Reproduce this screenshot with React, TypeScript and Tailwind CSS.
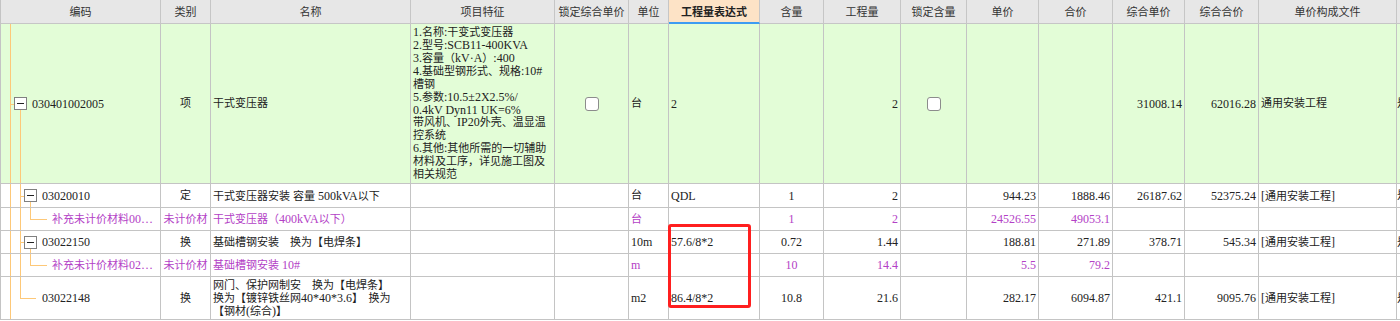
import React from 'react';

// latin runs get a size up so digits keep the half-width look of the original grid font
const LATIN = /([\u0020-\u007e±·…]+)/;
const mix = (s: string) => (
  <span>
    {s.split(LATIN).map((part, i) =>
      i % 2 ? (
        <span key={i} className="text-[12px]">
          {part}
        </span>
      ) : (
        <React.Fragment key={i}>{part}</React.Fragment>
      )
    )}
  </span>
);

const heads = [
  '编码',
  '类别',
  '名称',
  '项目特征',
  '锁定综合单价',
  '单位',
  '工程量表达式',
  '含量',
  '工程量',
  '锁定含量',
  '单价',
  '合价',
  '综合单价',
  '综合合价',
  '单价构成文件',
  '',
];

const align = [
  'justify-start',
  'justify-center',
  'justify-start',
  'justify-start',
  'justify-center',
  'justify-start',
  'justify-start',
  'justify-center',
  'justify-end',
  'justify-center',
  'justify-end',
  'justify-end',
  'justify-end',
  'justify-end',
  'justify-start',
  'justify-start',
];

const features = [
  '1.名称:干变式变压器',
  '2.型号:SCB11-400KVA',
  '3.容量（kV·A）:400',
  '4.基础型钢形式、规格:10#',
  '槽钢',
  '5.参数:10.5±2X2.5%/',
  '0.4kV Dyn11 UK=6%',
  '带风机、IP20外壳、温显温',
  '控系统',
  '6.其他:其他所需的一切辅助',
  '材料及工序，详见施工图及',
  '相关规范',
];

const Check = () => <span className="h-[14px] w-[14px] rounded-[3px] border border-[#8c8c8c] bg-white" />;

const Toggle = () => (
  <span className="relative z-10 flex h-[13px] w-[13px] shrink-0 items-center justify-center border border-[#808080] bg-white">
    <span className="h-px w-[7px] bg-[#222]" />
  </span>
);

const V = ({ x, part }: { x: string; part: 'full' | 'top' | 'bottom' }) => {
  const span = part === 'full' ? 'top-0 bottom-0' : part === 'top' ? 'top-0 h-1/2' : 'top-1/2 bottom-0';
  return <span className={`absolute w-px bg-[#fdc878] ${x} ${span}`} />;
};

const H = ({ x, w }: { x: string; w: string }) => (
  <span className={`absolute top-1/2 h-px bg-[#fdc878] ${x} ${w}`} />
);

type Row = {
  bg: string;
  color: string;
  tree: React.ReactNode;
  cells: React.ReactNode[];
};

const rows: Row[] = [
  {
    bg: 'bg-[#e3fdd7]',
    color: 'text-[#222]',
    tree: (
      <>
        <V x="left-[9px]" part="full" />
        <H x="left-[9px]" w="w-[4px]" />
        <V x="left-[19px]" part="bottom" />
        <span className="ml-[13px]">
          <Toggle />
        </span>
        <span className="ml-[5px]">{mix('030401002005')}</span>
      </>
    ),
    cells: [
      '项',
      '干式变压器',
      <div className="leading-[12.9px]">
        {features.map((f) => (
          <div key={f}>{mix(f)}</div>
        ))}
      </div>,
      <Check />,
      '台',
      '2',
      '',
      '2',
      <Check />,
      '',
      '',
      '31008.14',
      '62016.28',
      '通用安装工程',
      '是',
    ],
  },
  {
    bg: 'bg-white',
    color: 'text-[#222]',
    tree: (
      <>
        <V x="left-[9px]" part="full" />
        <V x="left-[19px]" part="full" />
        <H x="left-[19px]" w="w-[4px]" />
        <V x="left-[29px]" part="bottom" />
        <span className="ml-[23px]">
          <Toggle />
        </span>
        <span className="ml-[5px]">{mix('03020010')}</span>
      </>
    ),
    cells: [
      '定',
      '干式变压器安装 容量 500kVA以下',
      '',
      '',
      '台',
      'QDL',
      '1',
      '2',
      '',
      '944.23',
      '1888.46',
      '26187.62',
      '52375.24',
      '[通用安装工程]',
      '是',
    ],
  },
  {
    bg: 'bg-white',
    color: 'text-[#b341c6]',
    tree: (
      <>
        <V x="left-[9px]" part="full" />
        <V x="left-[19px]" part="full" />
        <V x="left-[29px]" part="top" />
        <H x="left-[29px]" w="w-[17px]" />
        <span className="ml-[51px]">{mix('补充未计价材料00…')}</span>
      </>
    ),
    cells: ['未计价材', '干式变压器（400kVA以下）', '', '', '台', '', '1', '2', '', '24526.55', '49053.1', '', '', '', ''],
  },
  {
    bg: 'bg-white',
    color: 'text-[#222]',
    tree: (
      <>
        <V x="left-[9px]" part="full" />
        <V x="left-[19px]" part="full" />
        <H x="left-[19px]" w="w-[4px]" />
        <V x="left-[29px]" part="bottom" />
        <span className="ml-[23px]">
          <Toggle />
        </span>
        <span className="ml-[5px]">{mix('03022150')}</span>
      </>
    ),
    cells: [
      '换',
      '基础槽钢安装\u3000换为【电焊条】',
      '',
      '',
      '10m',
      '57.6/8*2',
      '0.72',
      '1.44',
      '',
      '188.81',
      '271.89',
      '378.71',
      '545.34',
      '[通用安装工程]',
      '是',
    ],
  },
  {
    bg: 'bg-white',
    color: 'text-[#b341c6]',
    tree: (
      <>
        <V x="left-[9px]" part="full" />
        <V x="left-[19px]" part="full" />
        <V x="left-[29px]" part="top" />
        <H x="left-[29px]" w="w-[17px]" />
        <span className="ml-[51px]">{mix('补充未计价材料02…')}</span>
      </>
    ),
    cells: ['未计价材', '基础槽钢安装 10#', '', '', 'm', '', '10', '14.4', '', '5.5', '79.2', '', '', '', ''],
  },
  {
    bg: 'bg-white',
    color: 'text-[#222]',
    tree: (
      <>
        <V x="left-[9px]" part="full" />
        <V x="left-[19px]" part="top" />
        <H x="left-[19px]" w="w-[16px]" />
        <span className="ml-[41px]">{mix('03022148')}</span>
      </>
    ),
    cells: [
      '换',
      <div className="leading-[13px]">
        <div>{mix('网门、保护网制安\u3000换为【电焊条】')}</div>
        <div>{mix('换为【镀锌铁丝网40*40*3.6】\u3000换为')}</div>
        <div>{mix('【钢材(综合)】')}</div>
      </div>,
      '',
      '',
      'm2',
      '86.4/8*2',
      '10.8',
      '21.6',
      '',
      '282.17',
      '6094.87',
      '421.1',
      '9095.76',
      '[通用安装工程]',
      '是',
    ],
  },
];

export default function App() {
  return (
    <div className="relative h-[321px] w-[1400px] overflow-hidden bg-white font-['Liberation_Serif','Noto_Sans_CJK_SC',serif] text-[11px]">
      <div className="grid w-max grid-cols-[160px_50px_200px_144px_74px_40px_91px_64px_77px_66px_72px_74px_72px_74px_138px_60px] grid-rows-[24px_160px_24px_23px_23px_23px_43px] border-l border-[#c4c4c4]">
        {heads.map((h, i) =>
          i === 6 ? (
            <div
              key={i}
              className="flex items-center justify-center border-r border-b-2 border-r-[#c8c8c8] border-b-[#3d9cf2] bg-[#fde3c6] font-['Noto_Sans_CJK_SC',sans-serif] font-bold text-[#222]"
            >
              {h}
            </div>
          ) : (
            <div
              key={i}
              className="flex items-center justify-center border-r border-b border-[#c6c6c6] bg-[#e7e7e7] font-['Noto_Sans_CJK_SC',sans-serif] text-[#333]"
            >
              {h}
            </div>
          )
        )}

        {rows.map((r, ri) => (
          <React.Fragment key={ri}>
            <div className={`relative flex items-center overflow-hidden whitespace-nowrap border-r border-b border-[#c4c4c4] ${r.bg} ${r.color}`}>
              {r.tree}
            </div>
            {r.cells.map((c, ci) => (
              <div
                key={ci}
                className={`flex items-center overflow-hidden whitespace-pre border-b border-[#c4c4c4] px-[2px] ${
                  ci === 14 ? 'pl-0' : 'border-r'
                } ${align[ci + 1]} ${r.bg} ${r.color}`}
              >
                {typeof c === 'string' ? mix(c) : c}
              </div>
            ))}
          </React.Fragment>
        ))}
      </div>

      {/* red annotation frame over the expression column */}
      <div className="absolute left-[668px] top-[224px] h-[84px] w-[83px] rounded-[3px] border-[3px] border-[#ff1f1f]" />
    </div>
  );
}
